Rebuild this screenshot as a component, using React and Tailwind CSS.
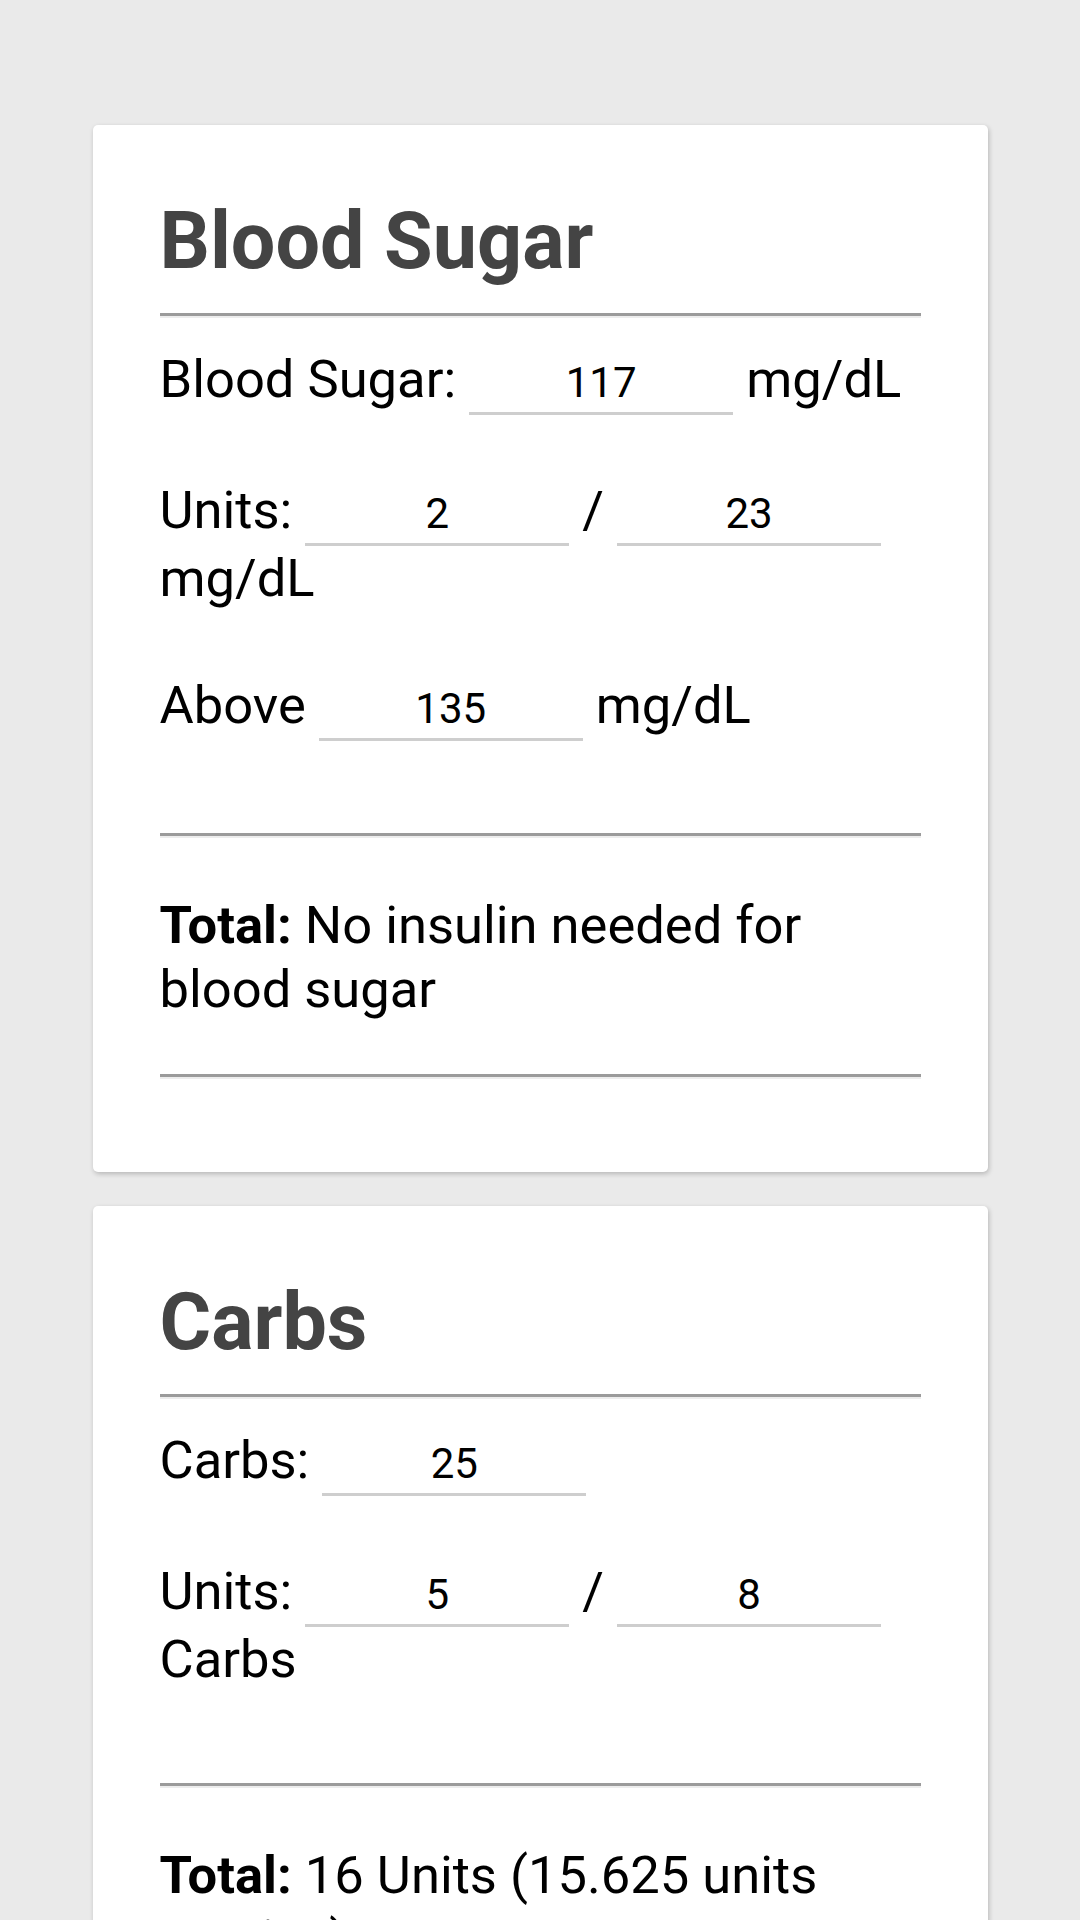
import React from "react";

// underlined number box used inside the calculator rows
const Field = ({ value }) => (
  <input
    type="text"
    readOnly
    value={value}
    className="inline-block w-[264px] h-[57px] p-0 pb-[5px] border-0 border-b-[3px] border-[#cecece] bg-transparent text-center text-[42px] leading-normal text-black outline-none align-baseline"
  />
);

const Rule = ({ className = "" }) => (
  <div className={`h-[5px] border-t-[3px] border-t-[#9b9b9b] border-b-[2px] border-b-[#ededed] ${className}`} />
);

const Card = ({ title, rows, total }) => (
  <div className="w-[895px] mx-auto bg-white rounded-[5px] shadow-[1px_2px_5px_rgba(0,0,0,0.22)] pt-[77px] px-[67px] pb-[93px]">
    <h2 className="text-[79px] font-bold leading-none text-[#444444]">{title}</h2>
    <Rule className="mt-[32px]" />

    {/* inputs */}
    <div className="flex flex-col gap-[63px] mt-[29px]">{rows}</div>

    <Rule className="mt-[92px]" />
    <p className="mt-[55px]">
      <b className="font-bold">Total:</b> {total}
    </p>
    <Rule className="mt-[53px]" />
  </div>
);

export default function App() {
  return (
    <div className="min-h-screen bg-[#eaeaea] pt-[125px] pb-[40px] font-[Roboto,sans-serif] text-[52.5px] leading-[64px] text-black">
      <div className="flex flex-col gap-[34px]">
        <Card
          title="Blood Sugar"
          rows={
            <>
              <p>Blood Sugar: <Field value="117" /> mg/dL</p>
              <p>Units: <Field value="2" /> / <Field value="23" /> mg/dL</p>
              <p>Above <Field value="135" /> mg/dL</p>
            </>
          }
          total="No insulin needed for blood sugar"
        />
        <Card
          title="Carbs"
          rows={
            <>
              <p>Carbs: <Field value="25" /></p>
              <p>Units: <Field value="5" /> / <Field value="8" /> Carbs</p>
            </>
          }
          total="16 Units (15.625 units precise)"
        />
      </div>
    </div>
  );
}
